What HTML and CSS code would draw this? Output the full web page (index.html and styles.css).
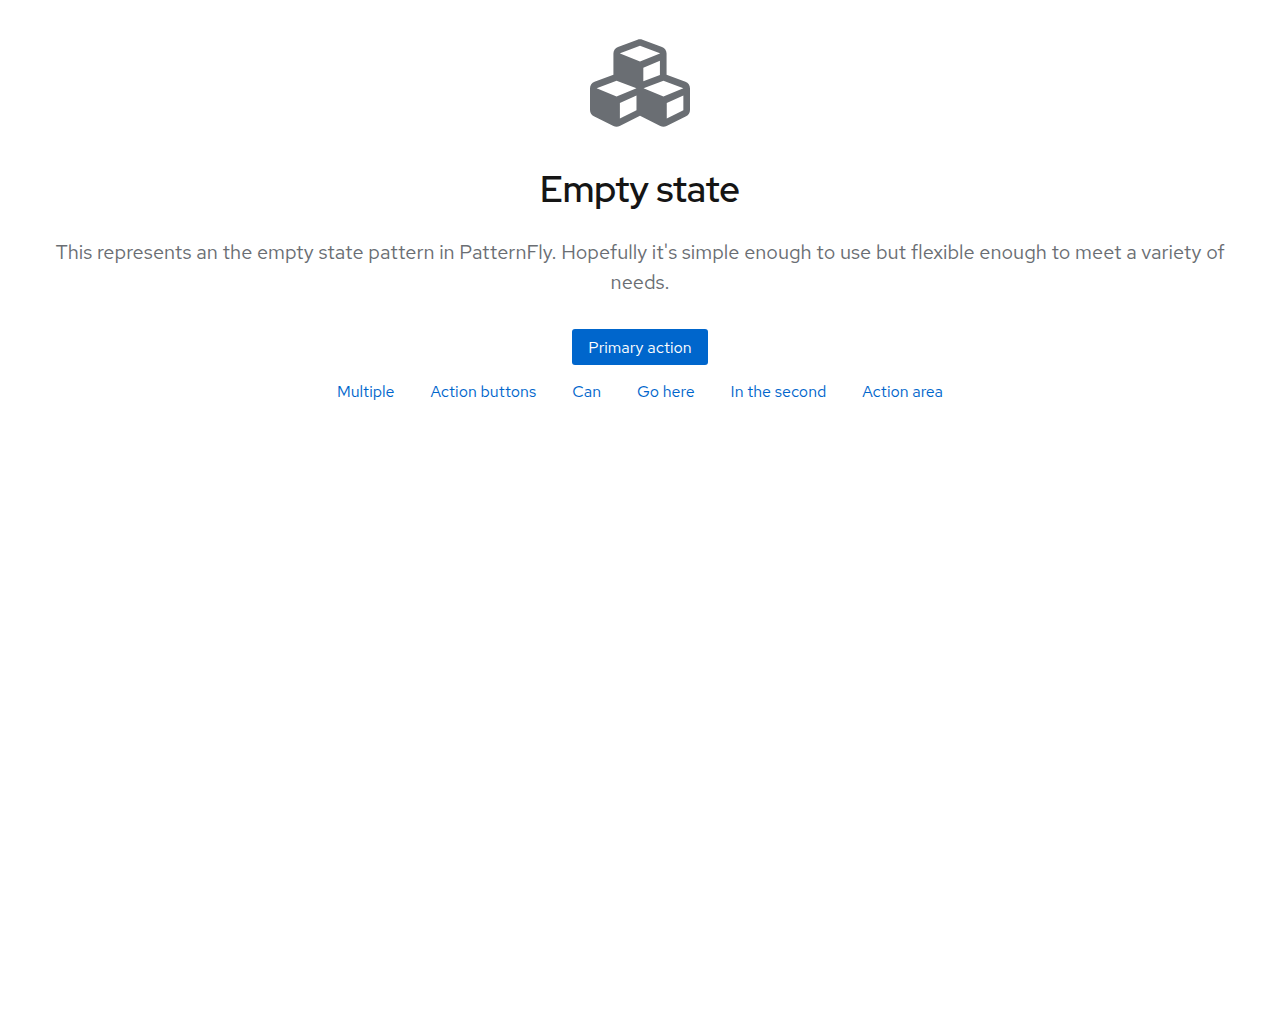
FILE: index.html
```html
<!DOCTYPE html>
<html lang="en">
<head>
<meta charset="utf-8">
<meta name="viewport" content="width=device-width, initial-scale=1">
<title>Empty state</title>
<link rel="stylesheet" href="styles.css">
</head>
<body>
<main class="empty-state">
  <svg class="empty-state-icon" viewBox="0 0 512 512" aria-hidden="true"><path fill="currentColor" d="M488.600 250.200L392 214V105.500c0-15-9.300-28.400-23.400-33.700l-100-37.500c-8.100-3.100-17.100-3.100-25.300 0l-100 37.500c-14.100 5.300-23.400 18.700-23.400 33.700V214l-96.600 36.200C9.300 255.500 0 268.900 0 283.900V394c0 13.600 7.700 26.100 19.900 32.200l100 50c10.100 5.100 22.100 5.100 32.200 0l103.900-52 103.900 52c10.100 5.100 22.100 5.100 32.200 0l100-50c12.200-6.100 19.900-18.600 19.900-32.200V283.900c0-15-9.300-28.400-23.400-33.700zM358 214.800l-85 31.900v-68.200l85-37v73.300zM154 104.100l102-38.200 102 38.200v.6l-102 41.400-102-41.400v-.6zm84 291.100l-85 42.500v-79.100l85-38.800v75.400zm0-112l-102 41.400-102-41.400v-.6l102-38.200 102 38.200v.6zm240 112l-85 42.500v-79.100l85-38.800v75.400zm0-112l-102 41.400-102-41.400v-.6l102-38.200 102 38.200v.6z"/></svg>
  <h1 class="empty-state-title">Empty state</h1>
  <p class="empty-state-body">This represents an the empty state pattern in PatternFly. Hopefully it's simple enough to use but flexible enough to meet a variety of needs.</p>
  <div class="empty-state-footer">
    <button type="button" class="button primary">Primary action</button>
    <div class="actions">
      <button type="button" class="button link">Multiple</button>
      <button type="button" class="button link">Action buttons</button>
      <button type="button" class="button link">Can</button>
      <button type="button" class="button link">Go here</button>
      <button type="button" class="button link">In the second</button>
      <button type="button" class="button link">Action area</button>
    </div>
  </div>
</main>
</body>
</html>
```

FILE: styles.css
```css
*, *::before, *::after { box-sizing: border-box; }

body {
  margin: 0;
  background: #fff;
  color: #151515;
  font: 400 16px/24px "Red Hat Text", "Noto Sans", sans-serif;
}

.empty-state {
  display: flex;
  flex-direction: column;
  align-items: center;
  padding: 33px 32px;
  text-align: center;
}

.empty-state-icon {
  width: 100px;
  height: 100px;
  color: #6a6e73;
}

.empty-state-title {
  margin: 32px 0 0;
  font: 600 36px/48px "Red Hat Display", Lato, sans-serif;
}

.empty-state-body {
  margin: 24px 0 0;
  color: #6a6e73;
  font-size: 20px;
  line-height: 30px;
}

.empty-state-footer {
  display: flex;
  flex-direction: column;
  align-items: center;
  gap: 8px;
  margin-top: 32px;
}

.actions {
  display: flex;
  flex-wrap: wrap;
  justify-content: center;
  gap: 4px;
}

.button {
  padding: 7px 16px 5px;
  border: 0;
  border-radius: 3px;
  background: none;
  font: inherit;
  cursor: pointer;
}

.primary { background: #06c; color: #fff; }
.link { color: #06c; }
```
